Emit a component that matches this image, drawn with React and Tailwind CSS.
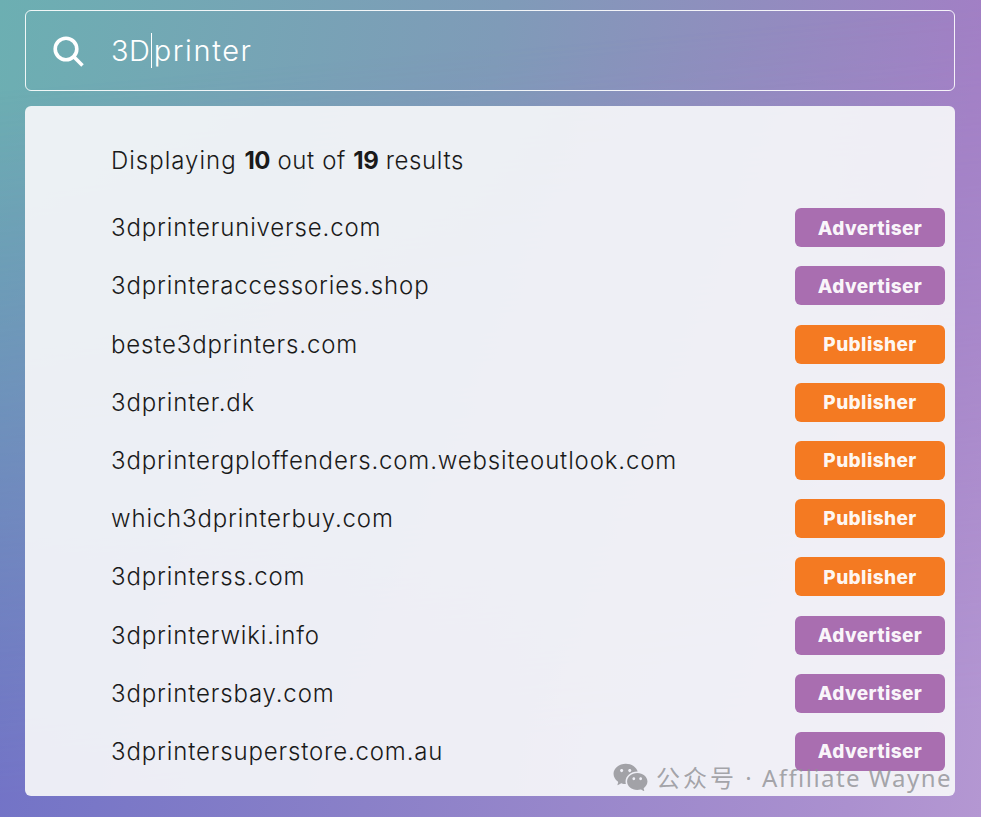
import React from 'react';
import { RiWechatFill } from 'react-icons/ri';

const results = [
  { domain: '3dprinteruniverse.com', type: 'Advertiser' },
  { domain: '3dprinteraccessories.shop', type: 'Advertiser' },
  { domain: 'beste3dprinters.com', type: 'Publisher' },
  { domain: '3dprinter.dk', type: 'Publisher' },
  { domain: '3dprintergploffenders.com.websiteoutlook.com', type: 'Publisher' },
  { domain: 'which3dprinterbuy.com', type: 'Publisher' },
  { domain: '3dprinterss.com', type: 'Publisher' },
  { domain: '3dprinterwiki.info', type: 'Advertiser' },
  { domain: '3dprintersbay.com', type: 'Advertiser' },
  { domain: '3dprintersuperstore.com.au', type: 'Advertiser' },
];

const App = () => {
  return (
    <div className="relative h-[817px] w-[981px] overflow-hidden pl-[25px] pr-[26px] pt-[10px] font-['Inter',sans-serif] bg-[linear-gradient(100deg,#6cafb2_0%,#7f9bb8_45%,#a27fc5_88%,#a67fc6_100%)]">
      {/* lower half of the backdrop fades to blue / light purple */}
      <div className="absolute inset-0 bg-[linear-gradient(100deg,#6a6fc6_0%,#8a80c8_45%,#ab90cf_88%,#b497d2_100%)] [mask-image:linear-gradient(175deg,transparent_10%,black_88%)]" />

      <div className="relative flex h-[81px] items-center rounded-md border border-white/90 pl-[26px]">
        <svg width="32" height="32" viewBox="0 0 32 32" fill="none" stroke="white" strokeWidth="3.6">
          <circle cx="14" cy="14" r="10.8" />
          <path d="M21.8 21.8 L30.5 30.5" />
        </svg>
        <div className="ml-[27px] flex items-center text-[29px] font-light text-white">
          <span className="tracking-[0.4px]">3D</span>
          <span className="ml-[0.5px] mr-[2px] h-[35px] w-[1px] bg-white" />
          <span className="tracking-[1.6px]">printer</span>
        </div>
      </div>

      <div className="relative mt-[15px] h-[690px] rounded-md bg-[#f5f6f9]/[0.93] pl-[86px] pr-[10px] pt-[39px] text-[#1a1a1a]">
        <p className="flex h-[32px] items-center text-[24px] font-[350] tracking-[0.6px] whitespace-pre">
          <span className="tracking-[1px]">Displaying </span>
          <b className="font-bold tracking-[-0.4px]">10</b>
          <span> out of </span>
          <b className="font-bold tracking-[-0.4px]">19</b>
          <span> results</span>
        </p>
        <ul className="mt-[31.25px] flex flex-col gap-[19.2px]">
          {results.map((r) => (
            <li key={r.domain} className="flex h-[39px] items-center justify-between">
              <span className="pt-[1px] text-[24px] font-[350] tracking-[0.85px]">{r.domain}</span>
              <span className={`flex h-[39px] w-[150px] items-center justify-center rounded-md pt-[2px] text-[19px] font-extrabold tracking-[0.4px] text-white/95 ${r.type === 'Advertiser' ? 'bg-[#a96eb0]' : 'bg-[#f47a22]'}`}>
                {r.type}
              </span>
            </li>
          ))}
        </ul>
      </div>

      <div className="absolute left-[612px] top-[759px] flex items-center text-[#8f8f94]/80">
        <RiWechatFill size={37} />
        <span className="ml-[7px] font-['Noto_Sans','Noto_Sans_CJK_SC',sans-serif] text-[24px] whitespace-pre">
          <span className="tracking-[3px]">公众号</span>
          <span className="tracking-[2px]"> · </span>
          <span className="tracking-[1.45px]">Affiliate Wayne</span>
        </span>
      </div>
    </div>
  );
};

export default App;
